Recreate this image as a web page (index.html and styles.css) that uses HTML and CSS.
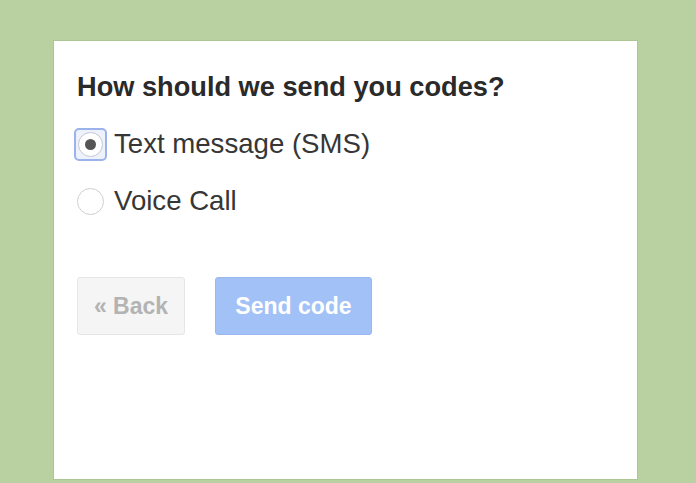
FILE: index.html
```html
<!DOCTYPE html>
<html lang="en">
<head>
  <meta charset="UTF-8" />
  <title>2-Step Verification</title>
  <link rel="stylesheet" href="styles.css">
</head>
<body>
  <div class="card">
    <h1>How should we send you codes?</h1>
    <div class="options">
      <label class="option">
        <span class="radio focused"><span class="circle checked"></span></span>
        <span class="label">Text message (SMS)</span>
      </label>
      <label class="option">
        <span class="radio"><span class="circle"></span></span>
        <span class="label">Voice Call</span>
      </label>
    </div>
    <div class="actions">
      <button class="btn back">&laquo; Back</button>
      <button class="btn send">Send code</button>
    </div>
  </div>
</body>
</html>
```

FILE: styles.css
```css
body {
  margin: 0;
  padding: 41px 0 0 54px;
  background-color: #b9d0a1;
  font-family: "Liberation Sans", Arial, sans-serif;
  height: 483px;
  box-sizing: border-box;
  overflow: hidden;
}

.card {
  width: 583px;
  height: 438px;
  box-sizing: border-box;
  background-color: #fff;
  box-shadow: 0 0 0 1px rgba(90, 120, 60, 0.12);
  padding: 30px 23px 0 23px;
}

.card h1 {
  margin: 0;
  font-size: 27.2px;
  line-height: 32px;
  font-weight: bold;
  color: #2a2a2a;
}

.options {
  display: flex;
  flex-direction: column;
  gap: 25px;
  margin-top: 25px;
}

.option {
  display: flex;
  align-items: center;
  height: 32px;
  margin-left: -3px;
  gap: 7px;
}

.radio {
  width: 33px;
  height: 33px;
  box-sizing: border-box;
  display: flex;
  align-items: center;
  justify-content: center;
  border-radius: 5px;
}

.radio.focused {
  border: 2px solid #9bb2ea;
  background-color: #eef2fc;
}

.circle {
  width: 27px;
  height: 27px;
  box-sizing: border-box;
  border-radius: 50%;
  border: 1px solid #cfcfcf;
  background-color: #fff;
  display: flex;
  align-items: center;
  justify-content: center;
}

.radio.focused .circle {
  width: 25px;
  height: 25px;
  border-color: #c4c8d2;
}

.circle.checked::after {
  content: "";
  width: 11px;
  height: 11px;
  border-radius: 50%;
  background-color: #555;
}

.label {
  font-size: 27.6px;
  line-height: 32px;
  color: #363636;
}

.actions {
  display: flex;
  gap: 30px;
  margin-top: 60px;
}

.btn {
  height: 58px;
  box-sizing: border-box;
  font-family: "Liberation Sans", Arial, sans-serif;
  font-size: 23px;
  font-weight: bold;
  border-radius: 3px;
  padding: 0;
}

.btn.back {
  width: 108px;
  background-color: #f5f5f5;
  border: 1px solid #e6e6e6;
  color: #b3b3b3;
}

.btn.send {
  width: 157px;
  background-color: #a2c1f6;
  border: 1px solid #98b8ef;
  color: #fff;
}
```
